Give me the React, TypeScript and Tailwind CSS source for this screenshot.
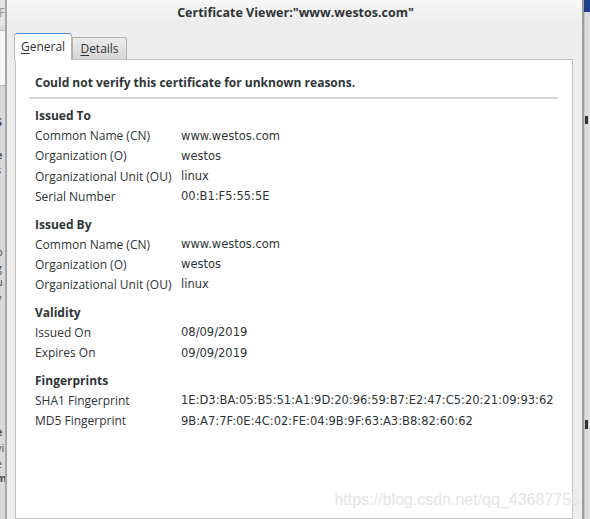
import React from 'react';

type Row = { label: string; value: string };

const SECTIONS: { title: string; rows: Row[] }[] = [
  {
    title: 'Issued To',
    rows: [
      { label: 'Common Name (CN)', value: 'www.westos.com' },
      { label: 'Organization (O)', value: 'westos' },
      { label: 'Organizational Unit (OU)', value: 'linux' },
      { label: 'Serial Number', value: '00:B1:F5:55:5E' },
    ],
  },
  {
    title: 'Issued By',
    rows: [
      { label: 'Common Name (CN)', value: 'www.westos.com' },
      { label: 'Organization (O)', value: 'westos' },
      { label: 'Organizational Unit (OU)', value: 'linux' },
    ],
  },
  {
    title: 'Validity',
    rows: [
      { label: 'Issued On', value: '08/09/2019' },
      { label: 'Expires On', value: '09/09/2019' },
    ],
  },
  {
    title: 'Fingerprints',
    rows: [
      { label: 'SHA1 Fingerprint', value: '1E:D3:BA:05:B5:51:A1:9D:20:96:59:B7:E2:47:C5:20:21:09:93:62' },
      { label: 'MD5 Fingerprint', value: '9B:A7:7F:0E:4C:02:FE:04:9B:9F:63:A3:B8:82:60:62' },
    ],
  },
];

// fragments of the window behind the dialog, left edge
const LEFT_BITS: { m: string; t: string; bold?: boolean }[] = [
  { m: 'mt-[29px]', t: 'S', bold: true },
  { m: 'mt-[19px]', t: 'e', bold: true },
  { m: 'mt-[1px]', t: 's' },
  { m: 'mt-[68px]', t: 'b' },
  { m: 'mt-[2px]', t: 'g' },
  { m: 'mt-0', t: 'u' },
  { m: 'mt-[2px]', t: 'v' },
  { m: 'mt-[120px]', t: 'e', bold: true },
  { m: 'mt-[2px]', t: 'vi' },
  { m: 'mt-[2px]', t: 'e' },
  { m: 'mt-0', t: 'm', bold: true },
];

export default function App() {
  return (
    <div
      className="w-[590px] h-[519px] flex overflow-hidden bg-[#d6d6d6] text-[#2e3436]"
      style={{ fontFamily: '"Open Sans", "DejaVu Sans", sans-serif' }}
    >
      {/* window behind, left */}
      <div className="w-[7px] shrink-0 flex flex-col bg-[#d9d9d9] border-r-2 border-[#a8a8a8] overflow-hidden">
        <div className="h-[26px] shrink-0 bg-[#e4e4e4] text-[12px] text-[#9a9a9a] leading-[26px] -ml-[1px]">F</div>
        <div className="h-[56px] shrink-0 mt-[4px] bg-[#f6f6f6] border-y border-[#b9b9b9]" />
        <div className="flex flex-col text-[11px] leading-[14px] text-[#4a4f51] -ml-[4px]">
          {LEFT_BITS.map((b, i) => (
            <div key={i} className={`${b.m} h-[14px] ${b.bold ? 'font-bold' : ''}`}>{b.t}</div>
          ))}
        </div>
      </div>

      {/* dialog */}
      <div className="w-[575px] shrink-0 flex flex-col bg-[#ededed] rounded-tr-[6px] rounded-tl-[6px]">
        <div className="h-[27px] shrink-0 flex items-center justify-center bg-gradient-to-b from-[#f7f7f7] to-[#ececec] font-bold text-[12.5px] pl-[2px]">
          Certificate Viewer:"www.westos.com"
        </div>

        <div className="flex flex-col pl-[8px] pr-[9px] pt-[5px] flex-1">
          {/* tabs */}
          <div className="flex items-end h-[27px]">
            <div className="h-[27px] w-[58px] -ml-[1px] -mb-[1px] bg-white border border-b-0 border-[#b6b6b6] border-t-[#4a90d9] rounded-t-[3px] flex items-center justify-center text-[12px] relative z-10">
              <span><span className="underline underline-offset-2">G</span>eneral</span>
            </div>
            <div className="h-[22px] w-[55px] bg-gradient-to-b from-[#ececec] to-[#d5d5d5] border border-b-0 border-[#b0b0b0] rounded-tr-[3px] flex items-center justify-center text-[12px]">
              <span><span className="underline underline-offset-2">D</span>etails</span>
            </div>
          </div>

          {/* page */}
          <div className="flex-1 bg-white border border-[#c2c2c2] pl-[19px] pr-[14px]">
            <div className="h-[36px] flex items-center pt-[9px] font-bold text-[12px]">
              Could not verify this certificate for unknown reasons.
            </div>
            <div className="h-[2px] bg-[#d4d4d4] -ml-[6px] mt-[1px]" />

            <div className="flex flex-col pt-[7px] text-[12px]">
              {SECTIONS.map((s, si) => (
                <div key={s.title} className={si > 0 ? 'mt-[7.5px]' : ''}>
                  <div className="h-[20.2px] flex items-center font-bold">{s.title}</div>
                  {s.rows.map((r) => (
                    <div key={r.label} className="h-[20.2px] flex items-center">
                      <div className="w-[146px] shrink-0 whitespace-nowrap">{r.label}</div>
                      <div
                        className="whitespace-nowrap text-[11.5px]"
                        style={{ fontFamily: '"DejaVu Sans", sans-serif' }}
                      >
                        {r.value}
                      </div>
                    </div>
                  ))}
                </div>
              ))}
            </div>

            <div className="flex justify-end mt-[60px] -mr-[22px]">
              <span
                className="text-[16px] leading-[18px] text-[#e4e4e4] whitespace-nowrap"
                style={{ fontFamily: '"Liberation Sans", Arial, sans-serif' }}
              >
                https://blog.csdn.net/qq_43687755
              </span>
            </div>
          </div>
        </div>
      </div>

      {/* window behind, right */}
      <div className="flex-1 flex flex-col border-l-2 border-[#9d9d9d]">
        <div className="h-[12px] bg-[#20418a]" />
        <div className="flex-1 bg-[#dcdcdc] border-l border-[#c4c4c4] flex flex-col">
          <div className="mt-[104px] h-[8px] w-[3px] bg-[#2e3436]" />
          <div className="mt-[296px] h-[9px] w-[3px] bg-[#2e3436]" />
        </div>
      </div>
    </div>
  );
}
